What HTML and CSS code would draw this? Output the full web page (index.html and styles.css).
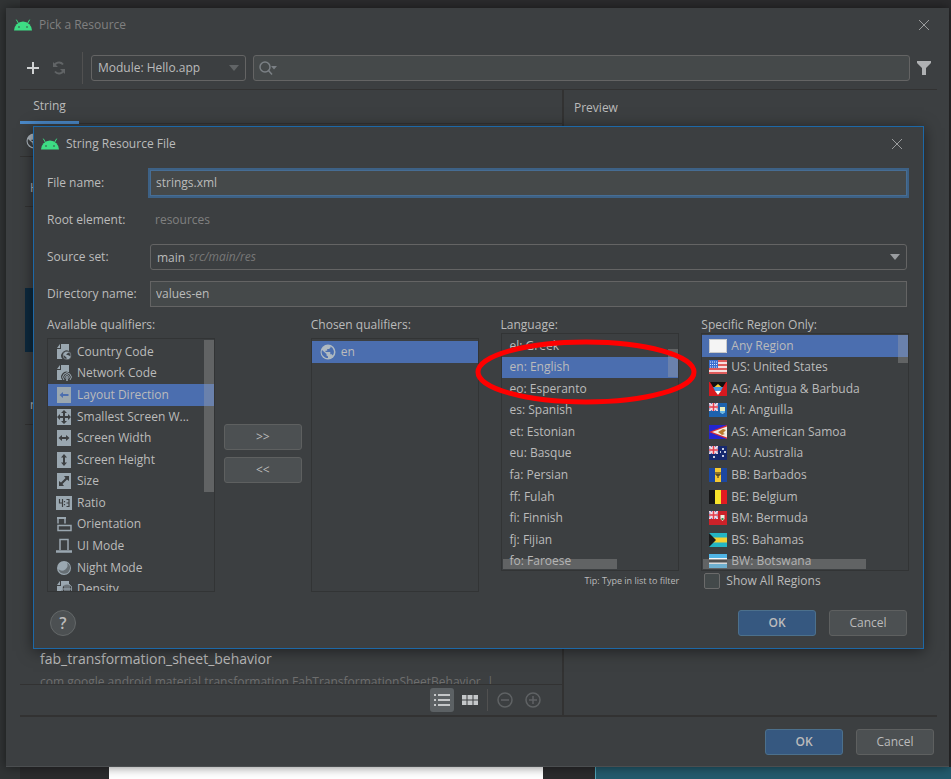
FILE: index.html
```html
<!DOCTYPE html>
<html lang="en">
<head>
    <meta charset="UTF-8">
    <meta name="viewport" content="width=device-width, initial-scale=1.0">
    <title>Pick a Resource</title>
    <link rel="stylesheet" href="styles.css">
</head>
<body>
    <!-- Shared icons -->
    <svg class="sprite" aria-hidden="true">
        <symbol id="android" viewBox="0 0 18 12">
            <path d="M0 11.5a9 9 0 0 1 18 0z" fill="#3ddc84"/>
            <path d="M4.5 4.500L2.500 1M13.500 4.500L15.500 1" stroke="#3ddc84" stroke-linecap="round"/>
            <circle cx="5" cy="8" r=".8" fill="#3c3f41"/>
            <circle cx="13" cy="8" r=".8" fill="#3c3f41"/>
        </symbol>
        <symbol id="close" viewBox="0 0 12 12">
            <path d="M1 1l10 10M11 1L1 11" stroke="currentColor" fill="none"/>
        </symbol>
        <symbol id="globe" viewBox="0 0 16 16">
            <circle cx="8" cy="8" r="7.500" fill="#afb9c1"/>
            <path d="M2 6l4.500 4v1.500l1.500 1V14A6 6 0 0 1 2 6zM10.500 2.500v1.300L9 5H7.200v1.700H5.500V8h4.800v2.200h1.500l1 1.200A6 6 0 0 0 10.500 2.500z" fill="currentColor"/>
        </symbol>
        <symbol id="doc" viewBox="0 0 16 16">
            <path d="M5 0h8v7.500A5 5 0 0 0 6.500 15H1V5h4z" fill="#9aa7b0"/>
            <path d="M4 0v4H1z" fill="#9aa7b0"/>
        </symbol>
        <symbol id="box" viewBox="0 0 16 16">
            <path d="M1 0h14v16H1z" fill="#9aa7b0"/>
        </symbol>
        <symbol id="jack" viewBox="0 0 9 8">
            <path d="M0 0h9v8H0z" fill="#4a62b4"/>
            <path d="M0 0l9 8M9 0L0 8" stroke="#f3d9e2" stroke-width="2"/>
            <path d="M4.500 0v8M0 4h9" stroke="#f6dfe4" stroke-width="3"/>
            <path d="M4.500 0v8M0 4h9" stroke="#e23c4b" stroke-width="1.500"/>
        </symbol>
    </svg>

    <main class="picker">
        <header class="titlebar">
            <svg class="android"><use href="#android"/></svg>
            <h1>Pick a Resource</h1>
            <button class="icon-button" aria-label="Close"><svg width="12" height="12"><use href="#close"/></svg></button>
        </header>

        <div class="toolbar">
            <button class="icon-button" aria-label="Add"><svg width="12" height="12" viewBox="0 0 12 12"><path d="M6 0v12M0 6h12" stroke="#d0d2d3" stroke-width="2"/></svg></button>
            <button class="icon-button" aria-label="Refresh"><svg width="14" height="14" viewBox="0 0 14 14" fill="none" stroke="#616466" stroke-width="2"><path d="M2 6a5 5 0 0 1 9-2.500M12 8a5 5 0 0 1-9 2.500"/><path d="M1 1v5h5zM13 13V8H8z" fill="#616466" stroke="none"/></svg></button>
            <span class="divider"></span>
            <div class="combo module">
                <select aria-label="Module"><option>Module: Hello.app</option></select>
                <svg class="arrow" viewBox="0 0 10 6"><path d="M0 0h10L5 6z"/></svg>
            </div>
            <div class="search">
                <svg width="18" height="14" viewBox="0 0 18 14" fill="none" stroke="#7b8085" stroke-width="1.500"><circle cx="6" cy="6" r="5"/><path d="M9.500 9.500l3.500 4"/><path d="M12 5h6l-3 3.500z" fill="#7b8085" stroke="none"/></svg>
                <input type="text" aria-label="Search">
            </div>
            <button class="icon-button" aria-label="Filter"><svg width="14" height="14" viewBox="0 0 14 14"><path d="M0 0h14v2L9 7v7H5V7L0 2z" fill="#afb1b3"/></svg></button>
        </div>

        <div class="content">
            <section class="resources">
                <nav class="tabs"><a href="#strings" class="tab">String</a></nav>
                <div class="locale-bar"><svg width="16" height="16"><use href="#globe"/></svg></div>
                <div class="rows" id="strings">
                    <div class="row first">H</div>
                    <div class="row plain"></div>
                    <div class="row current"></div>
                    <div class="row next">n</div>
                    <div class="row last">
                        <strong>fab_transformation_sheet_behavior</strong>
                        <span>com.google.android.material.transformation.FabTransformationSheetBehavior &nbsp;|</span>
                    </div>
                </div>
                <div class="view-bar">
                    <button class="view active" aria-label="List view"><svg width="16" height="12" viewBox="0 0 16 12"><path d="M0 0h2v2H0zM4 0h12v2H4zM0 5h2v2H0zM4 5h12v2H4zM0 10h2v2H0zM4 10h12v2H4z" fill="#c4c7c9"/></svg></button>
                    <button class="view" aria-label="Grid view"><svg width="16" height="10" viewBox="0 0 16 10"><path d="M0 0h4.500v4.500H0zM5.500 0h5v4.500h-5zM11.500 0H16v4.500h-4.500zM0 5.500h4.500V10H0zM5.500 5.500h5V10h-5zM11.500 5.500H16V10h-4.500z" fill="#c4c7c9"/></svg></button>
                    <span class="divider"></span>
                    <button class="view" aria-label="Zoom out"><svg width="16" height="16" viewBox="0 0 16 16" fill="none" stroke="#5f6264" stroke-width="1.500"><circle cx="8" cy="8" r="7"/><path d="M4 8h8"/></svg></button>
                    <button class="view" aria-label="Zoom in"><svg width="16" height="16" viewBox="0 0 16 16" fill="none" stroke="#5f6264" stroke-width="1.500"><circle cx="8" cy="8" r="7"/><path d="M4 8h8M8 4v8"/></svg></button>
                </div>
            </section>
            <section class="preview"><h2>Preview</h2></section>
        </div>

        <footer class="actions">
            <button class="button primary">OK</button>
            <button class="button">Cancel</button>
        </footer>
    </main>

    <!-- Editor showing under the window -->
    <div class="editor">
        <div class="page"></div>
        <div class="blueprint"></div>
    </div>

    <div class="dialog" role="dialog" aria-labelledby="dialog-title">
        <header class="titlebar">
            <svg class="android"><use href="#android"/></svg>
            <h2 id="dialog-title">String Resource File</h2>
            <button class="icon-button" aria-label="Close"><svg width="12" height="12"><use href="#close"/></svg></button>
        </header>

        <form class="form">
            <label for="file-name">File name:</label>
            <input type="text" id="file-name" class="focused" value="strings.xml">
            <label for="root-element">Root element:</label>
            <output id="root-element">resources</output>
            <label for="source-set">Source set:</label>
            <div class="combo">
                <select id="source-set"><option>main</option></select>
                <em>src/main/res</em>
                <svg class="arrow" viewBox="0 0 10 6"><path d="M0 0h10L5 6z"/></svg>
            </div>
            <label for="directory-name">Directory name:</label>
            <input type="text" id="directory-name" value="values-en">
        </form>

        <div class="lists">
            <section class="column">
                <h3>Available qualifiers:</h3>
                <div class="listbox tall">
                    <ul class="qualifiers">
                        <li><svg viewBox="0 0 16 16"><use href="#doc"/><circle cx="11" cy="11.500" r="4.500" fill="#9aa7b0" stroke="#3c3f41"/><path d="M7.500 11l3 2.500v1.500a4 4 0 0 1-3-4zM12.500 8.500l-2.500 2 3 1 1.500 1a3.500 3.500 0 0 0-2-4z" fill="#3c3f41"/></svg>Country Code</li>
                        <li><svg viewBox="0 0 16 16"><use href="#doc"/><circle cx="11" cy="12" r="5" fill="#3c3f41"/><path d="M8 15a4.200 4.200 0 1 1 6 0M9.500 13.500a2.200 2.200 0 1 1 3 0" stroke="#9aa7b0" fill="none"/><path d="M11 11v5" stroke="#9aa7b0" stroke-width="1.500"/></svg>Network Code</li>
                        <li class="selected"><svg viewBox="0 0 16 16"><use href="#box"/><path d="M3.500 8L7 5v2h5.500v2H7v2z" fill="#4b6eaf"/></svg>Layout Direction</li>
                        <li><svg viewBox="0 0 16 16"><use href="#box"/><path d="M8 1l3 3H9v3h3V5l3 3-3 3V9H9v3h2l-3 3-3-3h2V9H4v2L1 8l3-3v2h3V4H5z" fill="#3c3f41"/></svg>Smallest Screen W...</li>
                        <li><svg viewBox="0 0 16 16"><use href="#box"/><path d="M2.500 8L6 5v2h4V5l3.500 3-3.500 3V9H6v2z" fill="#3c3f41"/></svg>Screen Width</li>
                        <li><svg viewBox="0 0 16 16"><use href="#box"/><path d="M8 2l3 3.500H9v5h2L8 14l-3-3.500h2v-5H5z" fill="#3c3f41"/></svg>Screen Height</li>
                        <li><svg viewBox="0 0 16 16"><use href="#box"/><path d="M13 3v5l-2-1.500L6.500 11 8 13H3V8l2 1.500L9.500 5 8 3z" fill="#3c3f41"/></svg>Size</li>
                        <li><svg viewBox="0 0 16 16"><path d="M0 1h16v14H0z" fill="#9aa7b0"/><path d="M3.500 4v4H7M6.500 4v8M10.500 4.500H13v7h-2.500M10.500 8H13M8.500 6v1.200M8.500 9v1.200" stroke="#3c3f41" stroke-width="1.200" fill="none"/></svg>Ratio</li>
                        <li><svg viewBox="0 0 16 16" fill="none" stroke="#9aa7b0" stroke-width="1.500"><path d="M2 7.500V2h7v5.500"/><path d="M1 1h9v2H1z" fill="#9aa7b0" stroke="none"/><path d="M2 9.500h13v5H2z"/></svg>Orientation</li>
                        <li><svg viewBox="0 0 16 16" fill="none" stroke="#9aa7b0" stroke-width="1.500"><path d="M4 12V1.500h8V12"/><path d="M0 13.500h16" stroke-width="2.500"/></svg>UI Mode</li>
                        <li><svg viewBox="0 0 16 16"><circle cx="8" cy="8" r="7" fill="#9aa7b0"/><path d="M11 2.800a5.500 5.500 0 0 1-8.500 6.500 5.800 5.800 0 0 0 11 1 6 6 0 0 0-2.500-7.500z" fill="#3c3f41" opacity=".55"/></svg>Night Mode</li>
                        <li><svg viewBox="0 0 16 16"><use href="#doc"/><circle cx="11" cy="8" r="5" fill="#3c3f41" stroke="#9aa7b0"/><path d="M6 8h10M11 3v10M9 3v10M13 3v10" stroke="#9aa7b0"/></svg>Density</li>
                    </ul>
                    <span class="scroll-y"></span>
                </div>
            </section>

            <div class="transfer">
                <button class="button">&gt;&gt;</button>
                <button class="button">&lt;&lt;</button>
            </div>

            <section class="column">
                <h3>Chosen qualifiers:</h3>
                <div class="listbox tall">
                    <ul class="chosen">
                        <li class="selected"><svg viewBox="0 0 16 16"><use href="#globe"/></svg>en</li>
                    </ul>
                </div>
            </section>

            <section class="column language">
                <h3>Language:</h3>
                <div class="listbox">
                    <ul class="short">
                        <li>el: Greek</li>
                        <li class="selected">en: English</li>
                        <li>eo: Esperanto</li>
                        <li>es: Spanish</li>
                        <li>et: Estonian</li>
                        <li>eu: Basque</li>
                        <li>fa: Persian</li>
                        <li>ff: Fulah</li>
                        <li>fi: Finnish</li>
                        <li>fj: Fijian</li>
                        <li>fo: Faroese</li>
                    </ul>
                    <span class="scroll-y"></span>
                    <span class="scroll-x"></span>
                </div>
                <p class="tip">Tip: Type in list to filter</p>
                <svg class="highlight" viewBox="0 0 222 66"><ellipse cx="111" cy="33" rx="108" ry="30" fill="none" stroke="#f00" stroke-width="5"/></svg>
            </section>

            <section class="column region">
                <h3>Specific Region Only:</h3>
                <div class="listbox">
                    <ul class="short flags">
                        <li class="selected"><svg viewBox="0 0 18 14"><path d="M0 0h18v14H0z" fill="#f4f4f4"/><path d="M.5.5h17v13H.5z" fill="none" stroke="#c9c9c9"/></svg>Any Region</li>
                        <li><svg viewBox="0 0 18 14"><path d="M0 0h18v14H0z" fill="#f5dede"/><path d="M0 1h18M0 5h18M0 9h18M0 13h18" stroke="#df5b5b" stroke-width="2"/><path d="M0 0h9v8H0z" fill="#3c6fd0"/><path d="M1 2h8M1 4.500h8M1 7h8" stroke="#dfe9ff" stroke-dasharray="1 1"/></svg>US: United States</li>
                        <li><svg viewBox="0 0 18 14"><path d="M0 0h18v14H0z" fill="#d8191f"/><path d="M1 0h16L9 13z" fill="#111"/><path d="M4 5h10l-2 4H6z" fill="#4a9be0"/><path d="M6 9h6l-3 4z" fill="#fff"/><path d="M5.500 5L9 2l3.500 3z" fill="#f7d038"/></svg>AG: Antigua &amp; Barbuda</li>
                        <li><svg viewBox="0 0 18 14"><path d="M0 0h18v14H0z" fill="#1d62ad"/><use href="#jack" width="9" height="8"/><path d="M11 4h5v5l-2.500 2L11 9z" fill="#e8edc0"/><path d="M11 8h5v1l-2.500 2L11 9z" fill="#62b5e8"/></svg>AI: Anguilla</li>
                        <li><svg viewBox="0 0 18 14"><path d="M0 0h18v14H0z" fill="#2326d0"/><path d="M18 0v14L0 7z" fill="#d62c35"/><path d="M18 1.500v11L3 7z" fill="#f4ecdf"/><path d="M9 7l5-3 3 1-3 3 2 1-3 1z" fill="#b8792b"/></svg>AS: American Samoa</li>
                        <li><svg viewBox="0 0 18 14"><path d="M0 0h18v14H0z" fill="#16296f"/><use href="#jack" width="9" height="8"/><path d="M4 11h2M13 3h2M11 6h1M15 6h2M13 10h2" stroke="#fff" stroke-width="1.500"/></svg>AU: Australia</li>
                        <li><svg viewBox="0 0 18 14"><path d="M0 0h18v14H0z" fill="#1c47a0"/><path d="M6 0h6v14H6z" fill="#f5c932"/><path d="M7 4v3h4V4M9 4v6" stroke="#222" fill="none"/></svg>BB: Barbados</li>
                        <li><svg viewBox="0 0 18 14"><path d="M0 0h6v14H0z" fill="#171717"/><path d="M6 0h6v14H6z" fill="#f7e32b"/><path d="M12 0h6v14h-6z" fill="#e21b22"/></svg>BE: Belgium</li>
                        <li><svg viewBox="0 0 18 14"><path d="M0 0h18v14H0z" fill="#cc2229"/><use href="#jack" width="9" height="8"/><path d="M11.500 4h4v4l-2 2-2-2z" fill="#e9f1e4"/><path d="M12.500 7h2v2h-2z" fill="#3f8a49"/></svg>BM: Bermuda</li>
                        <li><svg viewBox="0 0 18 14"><path d="M0 0h18v14H0z" fill="#24b5c4"/><path d="M0 4.500h18v5H0z" fill="#f5cf31"/><path d="M0 0l7 7-7 7z" fill="#1b1b1b"/></svg>BS: Bahamas</li>
                        <li><svg viewBox="0 0 18 14"><path d="M0 0h18v14H0z" fill="#50b4e4"/><path d="M0 4h18v6H0z" fill="#f5f5f5"/><path d="M0 5.500h18v3H0z" fill="#222"/></svg>BW: Botswana</li>
                    </ul>
                    <span class="scroll-y"></span>
                    <span class="scroll-x"></span>
                </div>
                <label class="check"><input type="checkbox">Show All Regions</label>
            </section>
        </div>

        <footer class="actions">
            <button class="help" aria-label="Help">?</button>
            <button class="button primary">OK</button>
            <button class="button">Cancel</button>
        </footer>
    </div>
</body>
</html>
```

FILE: styles.css
```css
* {
    box-sizing: border-box;
}

body {
    margin: 0;
    min-height: 100vh;
    display: flex;
    flex-direction: column;
    position: relative;
    padding-top: 8px;
    background: linear-gradient(to right, #313435 20px, #2b2b2d 20px);
    color: #bbbbbb;
    font-family: "Open Sans", "Noto Sans", sans-serif;
    font-size: 12px;
    line-height: 20px;
}

h1, h2, h3, p, ul {
    margin: 0;
    padding: 0;
    font-size: inherit;
    font-weight: normal;
}

button, input, select {
    font: inherit;
    color: inherit;
    margin: 0;
}

.sprite {
    position: absolute;
    width: 0;
    height: 0;
}

/* Main window */
.picker {
    flex: 1;
    display: flex;
    flex-direction: column;
    margin: 0 2px 0 6px;
    padding: 0 12px 0 14px;
    background: #3c3f41;
    border-bottom: 1px solid #4b4e50;
    box-shadow: 0 0 10px rgba(0, 0, 0, 0.5);
    z-index: 1;
}

.titlebar {
    display: flex;
    align-items: center;
    gap: 7px;
    height: 34px;
}

.picker > .titlebar {
    margin: 0 0 0 -6px;
    color: #808080;
}

.titlebar .icon-button {
    margin-left: auto;
    color: #9a9c9d;
}

.android {
    width: 18px;
    height: 12px;
}

.icon-button {
    display: flex;
    align-items: center;
    justify-content: center;
    width: 26px;
    height: 26px;
    padding: 0;
    background: none;
    border: none;
}

.toolbar {
    display: flex;
    align-items: center;
    height: 48px;
    border-bottom: 1px solid #323232;
    padding-top: 5px;
}

.toolbar .divider {
    width: 1px;
    height: 32px;
    margin: 0 8px 0 10px;
    background: #515151;
}

.search {
    flex: 1;
    display: flex;
    align-items: center;
    height: 26px;
    margin-left: 7px;
    padding-left: 5px;
    background: #45494a;
    border: 1px solid #646464;
    border-radius: 3px;
}

.search input {
    flex: 1;
    min-width: 0;
    background: none;
    border: none;
    outline: none;
}

.toolbar .icon-button:last-child {
    margin-right: -1px;
    width: 28px;
}

.combo {
    position: relative;
    height: 26px;
}

.combo select {
    appearance: none;
    width: 100%;
    height: 100%;
    padding: 0 6px;
    background: #3c3f41;
    border: 1px solid #646464;
    border-radius: 3px;
}

.combo em {
    position: absolute;
    left: 39px;
    top: 0;
    color: #777777;
    pointer-events: none;
}

.combo .arrow {
    position: absolute;
    right: 7px;
    top: 10px;
    width: 10px;
    height: 6px;
    fill: #9a9da0;
    pointer-events: none;
}

.module {
    width: 155px;
}

.module .arrow {
    fill: #616466;
}

.content {
    flex: 1;
    display: grid;
    grid-template-columns: minmax(0, 544fr) minmax(0, 373fr);
    border-bottom: 2px solid #323232;
}

.resources {
    display: flex;
    flex-direction: column;
    border-right: 2px solid #323232;
}

.preview {
    padding: 8px 10px;
}

.tabs {
    height: 34px;
    border-bottom: 1px solid #323232;
}

.tab {
    display: block;
    width: 59px;
    height: 34px;
    line-height: 32px;
    text-align: center;
    color: inherit;
    text-decoration: none;
    border-bottom: 3px solid #4a88c7;
}

.locale-bar {
    height: 33px;
    padding: 9px 6px;
    color: #3c3f41;
    border-bottom: 1px solid #323232;
}

.rows {
    flex: 1;
    display: flex;
    flex-direction: column;
    overflow: hidden;
    padding-left: 5px;
}

.row {
    padding-left: 5px;
}

.row.first {
    height: 50px;
    padding-top: 21px;
    border-bottom: 1px solid #323232;
}

.row.plain {
    height: 81px;
}

.row.current {
    height: 64px;
    background: #0d293e;
}

.row.next {
    height: 73px;
    padding-top: 43px;
    border-bottom: 1px solid #323232;
}

.row.last {
    height: 35px;
    margin-top: auto;
    padding-left: 15px;
    white-space: nowrap;
}

.row strong {
    display: block;
    font-size: 14px;
    font-weight: normal;
}

.row.last span {
    display: block;
    line-height: 26px;
    color: #6e6e6e;
}

.view-bar {
    display: flex;
    align-items: center;
    justify-content: flex-end;
    gap: 4px;
    height: 31px;
    padding-right: 17px;
    border-top: 1px solid #323232;
}

.view {
    display: flex;
    align-items: center;
    justify-content: center;
    width: 24px;
    height: 24px;
    padding: 0;
    background: none;
    border: none;
    border-radius: 3px;
}

.view.active {
    background: #5c6164;
}

.view-bar .divider {
    width: 1px;
    height: 22px;
    margin: 0 1px;
    background: #515151;
}

.actions {
    display: flex;
    align-items: center;
    gap: 13px;
}

.picker > .actions {
    justify-content: flex-end;
    height: 49px;
    margin-right: 3px;
}

.button {
    width: 78px;
    height: 26px;
    padding: 0;
    background: #4c5052;
    border: 1px solid #5e6060;
    border-radius: 3px;
}

.button.primary {
    background: #365880;
    border-color: #4c708c;
    font-weight: 600;
}

.editor {
    display: flex;
    height: 12px;
    padding-left: 109px;
}

.page {
    width: 434px;
    margin-right: 52px;
    background: #ffffff;
}

.blueprint {
    flex: 1;
    background: #235a6c;
    border-left: 1px solid #4fa3b8;
}

/* Dialog */
.dialog {
    position: absolute;
    z-index: 2;
    top: 126px;
    left: 33px;
    right: 27px;
    padding: 0 16px 0 13px;
    background: #3c3f41;
    border: 1px solid #1d68a7;
    box-shadow: 0 2px 14px rgba(0, 0, 0, 0.5);
}

.dialog > .titlebar {
    margin: 0 -3px 0 -6px;
}

.form {
    display: grid;
    grid-template-columns: 94px minmax(0, 1fr);
    column-gap: 9px;
    row-gap: 11px;
    padding-top: 9px;
    line-height: 26px;
}

.form > input {
    height: 26px;
    padding: 0 5px;
    background: #45494a;
    border: 1px solid #646464;
    outline: none;
}

.form > input.focused {
    border-color: #466d94;
    box-shadow: 0 0 0 2px #3d6185;
}

.form output {
    padding-left: 5px;
    color: #808080;
}

.lists {
    display: grid;
    grid-template-columns: minmax(0, 168fr) 96px minmax(0, 168fr) minmax(0, 201fr) minmax(0, 230fr);
    padding-top: 9px;
    margin-right: -2px;
}

.column {
    position: relative;
}

.column h3 {
    height: 17px;
    line-height: 18px;
}

.language, .region {
    margin-left: 22px;
}

.listbox {
    position: relative;
    height: 238px;
    overflow: hidden;
    border: 1px solid #323435;
}

.listbox.tall {
    height: 254px;
    margin-top: 5px;
}

.listbox ul {
    display: grid;
    grid-auto-rows: 1fr;
    list-style: none;
}

.listbox li {
    display: flex;
    align-items: center;
    gap: 5px;
    padding-left: 8px;
    white-space: nowrap;
}

.listbox li svg {
    flex: none;
    width: 16px;
    height: 16px;
    color: #4b6eaf;
}

.listbox .selected {
    background: #4b6eaf;
}

.qualifiers {
    height: 259px;
    margin-top: 2px;
}

.chosen {
    height: 22px;
    margin-top: 2px;
}

.short {
    height: 237px;
    margin-top: 1px;
}

.listbox .flags li {
    gap: 4px;
    padding-left: 7px;
}

.listbox .flags svg {
    width: 18px;
    height: 14px;
}

.scroll-y, .scroll-x {
    position: absolute;
    background: rgba(166, 166, 166, 0.35);
}

.scroll-y {
    top: 1px;
    right: 0;
    width: 10px;
    height: 152px;
}

.language .scroll-y {
    top: 15px;
    height: 28px;
}

.region .scroll-y {
    height: 28px;
}

.scroll-x {
    left: 1px;
    bottom: 1px;
    width: 65%;
    height: 10px;
}

.region .scroll-x {
    width: 79%;
}

.transfer {
    display: flex;
    flex-direction: column;
    gap: 7px;
    padding-top: 108px;
    margin: 0 9px;
}

.tip {
    font-size: 9px;
    text-align: right;
}

.highlight {
    position: absolute;
    top: 23px;
    left: -26px;
    width: 222px;
    height: 66px;
    pointer-events: none;
    z-index: 1;
}

.check {
    display: flex;
    align-items: center;
    gap: 6px;
    padding-left: 3px;
}

.check input {
    appearance: none;
    width: 16px;
    height: 16px;
    background: #43494a;
    border: 1px solid #6b6b6b;
    border-radius: 2px;
}

.dialog > .actions {
    height: 56px;
    padding: 6px 0 0 3px;
}

.help {
    width: 26px;
    height: 26px;
    margin-right: auto;
    padding: 0;
    background: #4c5052;
    border: 1px solid #646869;
    border-radius: 50%;
    font-size: 16px;
    font-weight: 600;
}
```
